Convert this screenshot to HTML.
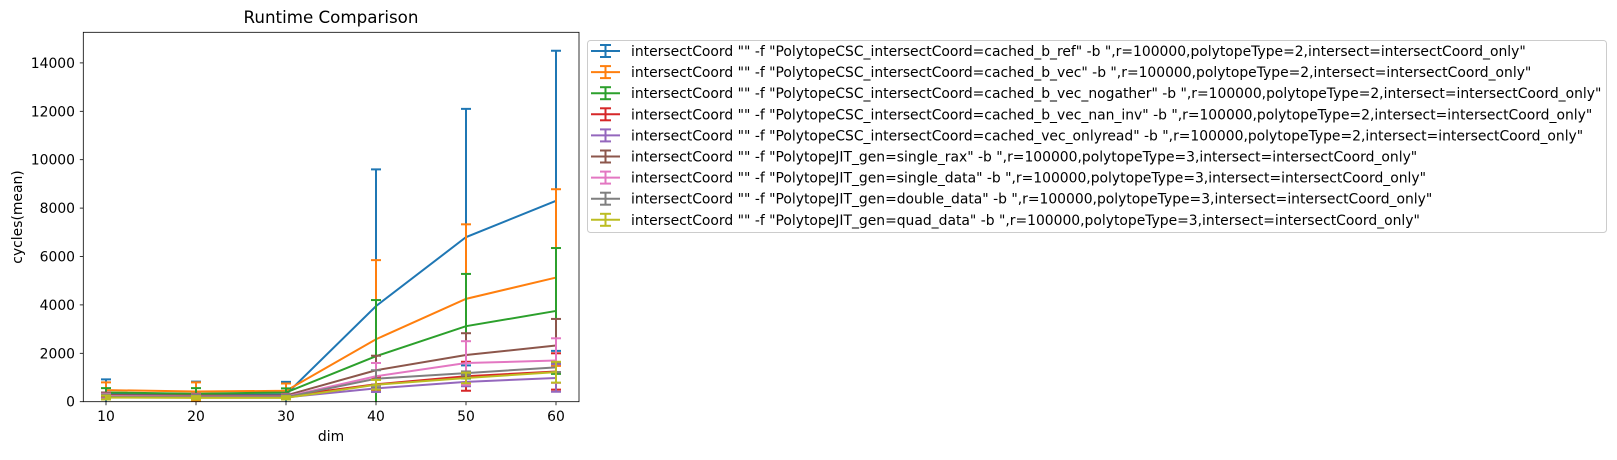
<!DOCTYPE html>
<html><head><meta charset="utf-8"><style>
body{margin:0;background:#fff;width:1617px;height:455px;overflow:hidden}
svg{font-family:"DejaVu Sans","Liberation Sans",sans-serif}
</style></head><body>
<svg id="s" width="1617" height="455" xmlns="http://www.w3.org/2000/svg">
<defs><clipPath id="c"><rect x="83.3" y="32.3" width="495.7" height="369.4"/></clipPath></defs>
<text x="331" y="23" font-size="16.7" text-anchor="middle">Runtime Comparison</text>
<g font-size="13.9" fill="#000">
<text x="75" y="406.7" text-anchor="end">0</text>
<text x="75" y="358.3" text-anchor="end">2000</text>
<text x="75" y="309.9" text-anchor="end">4000</text>
<text x="75" y="261.5" text-anchor="end">6000</text>
<text x="75" y="213.1" text-anchor="end">8000</text>
<text x="75" y="164.7" text-anchor="end">10000</text>
<text x="75" y="116.3" text-anchor="end">12000</text>
<text x="75" y="67.9" text-anchor="end">14000</text>
<text x="106" y="421" text-anchor="middle">10</text>
<text x="196" y="421" text-anchor="middle">20</text>
<text x="286" y="421" text-anchor="middle">30</text>
<text x="376" y="421" text-anchor="middle">40</text>
<text x="466" y="421" text-anchor="middle">50</text>
<text x="556" y="421" text-anchor="middle">60</text>
<text x="331" y="441" text-anchor="middle">dim</text>
<text transform="translate(22,217) rotate(-90)" text-anchor="middle">cycles(mean)</text>
</g>
<g id="plot" clip-path="url(#c)"></g>
<g id="ticks" stroke="#000" stroke-width="0.8"></g>
<rect x="83.3" y="32.3" width="495.7" height="369.4" fill="none" stroke="#000" stroke-width="0.8"/>
<rect x="587.5" y="40.5" width="1019" height="192" rx="3" fill="#fff" stroke="#ccc" stroke-width="1"/>
<g id="leg"></g>
<g font-size="13.9" fill="#000">
<text x="631" y="56">intersectCoord "" -f "PolytopeCSC_intersectCoord=cached_b_ref" -b ",r=100000,polytopeType=2,intersect=intersectCoord_only"</text>
<text x="631" y="77.1">intersectCoord "" -f "PolytopeCSC_intersectCoord=cached_b_vec" -b ",r=100000,polytopeType=2,intersect=intersectCoord_only"</text>
<text x="631" y="98.2">intersectCoord "" -f "PolytopeCSC_intersectCoord=cached_b_vec_nogather" -b ",r=100000,polytopeType=2,intersect=intersectCoord_only"</text>
<text x="631" y="119.3">intersectCoord "" -f "PolytopeCSC_intersectCoord=cached_b_vec_nan_inv" -b ",r=100000,polytopeType=2,intersect=intersectCoord_only"</text>
<text x="631" y="140.4">intersectCoord "" -f "PolytopeCSC_intersectCoord=cached_vec_onlyread" -b ",r=100000,polytopeType=2,intersect=intersectCoord_only"</text>
<text x="631" y="161.5">intersectCoord "" -f "PolytopeJIT_gen=single_rax" -b ",r=100000,polytopeType=3,intersect=intersectCoord_only"</text>
<text x="631" y="182.6">intersectCoord "" -f "PolytopeJIT_gen=single_data" -b ",r=100000,polytopeType=3,intersect=intersectCoord_only"</text>
<text x="631" y="203.7">intersectCoord "" -f "PolytopeJIT_gen=double_data" -b ",r=100000,polytopeType=3,intersect=intersectCoord_only"</text>
<text x="631" y="224.8">intersectCoord "" -f "PolytopeJIT_gen=quad_data" -b ",r=100000,polytopeType=3,intersect=intersectCoord_only"</text>
</g>
</svg>
<script>
var C=['#1f77b4','#ff7f0e','#2ca02c','#d62728','#9467bd','#8c564b','#e377c2','#7f7f7f','#bcbd22'];
var M=[[300,280,300,3950,6800,8300],[480,420,450,2580,4250,5130],[380,330,380,1880,3120,3750],[250,230,230,720,1050,1250],[200,180,180,550,820,980],[280,250,260,1300,1930,2320],[230,210,210,1050,1600,1700],[200,190,190,950,1180,1420],[170,160,160,700,980,1220]];
var U=[[920,830,820,9600,12100,14500],[800,800,750,5850,7330,8780],[560,560,550,4200,5280,6350],[350,300,300,1000,1650,2000],[280,250,250,700,1000,1550],[380,330,330,1900,2830,3420],[330,300,300,1600,2500,2620],[300,280,280,1300,1250,1620],[250,230,230,900,1200,1650]];
function X(i){return 106+90*i}function Y(v){return 401.7-v*0.0242}
var W=2;
var h='';
for(var k=0;k<9;k++){var p='';for(var i=0;i<6;i++){var m=M[k][i],u=U[k][i],l=2*m-u;var x=X(i);
p+=(i?'L':'M')+x+','+Y(m);
h+='<line x1="'+x+'" y1="'+Y(u)+'" x2="'+x+'" y2="'+Y(l)+'" stroke="'+C[k]+'" stroke-width="'+W+'"/>';
h+='<line x1="'+(x-5)+'" y1="'+Y(u)+'" x2="'+(x+5)+'" y2="'+Y(u)+'" stroke="'+C[k]+'" stroke-width="'+W+'"/>';
if(l>-500)h+='<line x1="'+(x-5)+'" y1="'+Y(l)+'" x2="'+(x+5)+'" y2="'+Y(l)+'" stroke="'+C[k]+'" stroke-width="'+W+'"/>';}
h+='<path d="'+p+'" fill="none" stroke="'+C[k]+'" stroke-width="'+W+'"/>';}
document.getElementById('plot').innerHTML=h;
var t='';for(var j=0;j<8;j++){var y=Y(j*2000);t+='<line x1="79.8" y1="'+y+'" x2="83.3" y2="'+y+'"/>';}
for(var i=0;i<6;i++){t+='<line x1="'+X(i)+'" y1="401.7" x2="'+X(i)+'" y2="405.2"/>';}
document.getElementById('ticks').innerHTML=t;
var g='';for(var k=0;k<9;k++){var y=51+k*21.1;
g+='<line x1="591" y1="'+y+'" x2="620" y2="'+y+'" stroke="'+C[k]+'" stroke-width="'+W+'"/>';
g+='<line x1="605.5" y1="'+(y-6)+'" x2="605.5" y2="'+(y+6)+'" stroke="'+C[k]+'" stroke-width="'+W+'"/>';
g+='<line x1="600" y1="'+(y-6)+'" x2="611" y2="'+(y-6)+'" stroke="'+C[k]+'" stroke-width="'+W+'"/>';
g+='<line x1="600" y1="'+(y+6)+'" x2="611" y2="'+(y+6)+'" stroke="'+C[k]+'" stroke-width="'+W+'"/>';}
document.getElementById('leg').innerHTML=g;
</script>
</body></html>
